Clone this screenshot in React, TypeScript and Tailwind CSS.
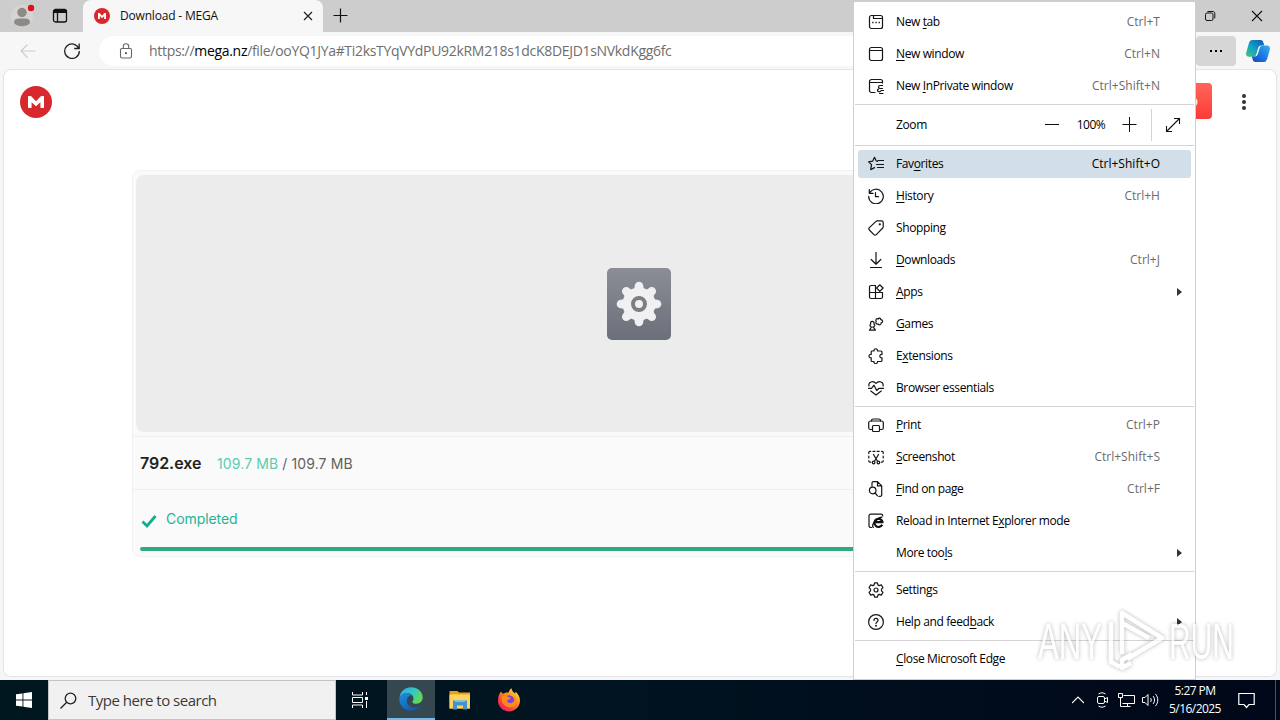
import { ReactNode } from "react";
import clsx from "clsx";

type Item = {
  label: string; // "&" marks the access key
  keys?: string;
  icon?: ReactNode;
  sub?: boolean;
  active?: boolean;
};

const Icon = ({ children }: { children: ReactNode }) => (
  <svg
    className="h-4 w-4 shrink-0"
    viewBox="0 0 16 16"
    fill="none"
    stroke="#151515"
    strokeWidth="1.2"
    strokeLinecap="round"
    strokeLinejoin="round">
    {children}
  </svg>
);

const groups: Item[][] = [
  [
    {
      label: "New &tab",
      keys: "Ctrl+T",
      icon: (
        <Icon>
          <rect x="1.5" y="1.5" width="13" height="13" rx="2" />
          <path d="M5.5 1.5v3h9" />
          <path d="M4.2 8.5h1.3M7.4 8.5h1.3M10.6 8.5h1.3" strokeWidth="1.6" strokeLinecap="butt" />
        </Icon>
      ),
    },
    {
      label: "&New window",
      keys: "Ctrl+N",
      icon: (
        <Icon>
          <rect x="1.5" y="1.5" width="13" height="13" rx="2" />
          <path d="M1.5 4.5h13" />
        </Icon>
      ),
    },
    {
      label: "New &InPrivate window",
      keys: "Ctrl+Shift+N",
      icon: (
        <Icon>
          <path d="M7 14.5H3.5a2 2 0 0 1-2-2v-9a2 2 0 0 1 2-2h9a2 2 0 0 1 2 2V5M1.5 4.5h13" />
          <path d="M14.5 7.5h-2.2c-1 0-1.8.8-1.8 1.6s.6 1.4 1.500 1.400h2.500M15.500 12.500h-2.200c-.6 0-.6 1.200-1.400 1.200H11c-1 0-1.600-.6-1.600-1.400 0-.7.5-1.200 1.200-1.200M11.500 15.600h3.500" />
        </Icon>
      ),
    },
  ],
  [
    {
      label: "Fav&orites",
      keys: "Ctrl+Shift+O",
      active: true,
      icon: (
        <Icon>
          <path d="M9.600 5.300 8.300 5 6.500 1.300 4.600 5.200.6 5.800l2.900 2.900-.8 4.900 3.800-2" />
          <path d="M10 4.500h5.500M8.500 8.500h7M9.500 11.500h6" />
        </Icon>
      ),
    },
    {
      label: "&History",
      keys: "Ctrl+H",
      icon: (
        <Icon>
          <path d="M1.300 1.500v3.800h3.800M1.600 5A7.300 7.300 0 1 1 .7 8.400M7.500 4.500v4.200h3" />
        </Icon>
      ),
    },
    {
      label: "Shopping",
      icon: (
        <Icon>
          <path d="M9.200.9h4.400c.9 0 1.600.7 1.600 1.600v4.300c0 .5-.2.9-.5 1.200l-6.400 6.600a1.700 1.700 0 0 1-2.400 0L1.400 10a1.700 1.700 0 0 1 0-2.400L8 1.400c.3-.3.8-.5 1.200-.5z" />
          <circle cx="11.800" cy="4.300" r=".5" fill="#222" />
        </Icon>
      ),
    },
    {
      label: "&Downloads",
      keys: "Ctrl+J",
      icon: (
        <Icon>
          <path d="M8 .5v11.500M3.200 7.500 8 12.200l4.800-4.700M2.500 15.500h11" />
        </Icon>
      ),
    },
    {
      label: "&Apps",
      sub: true,
      icon: (
        <Icon>
          <path d="M7.500 14.500H3A1.500 1.500 0 0 1 1.500 13V3A1.500 1.500 0 0 1 3 1.500h4.500v13zm0 0H13a1.500 1.500 0 0 0 1.500-1.500V8.500h-13" />
          <path d="m11.700.8 3.400 3.200-3.300 3.400L8.600 4z" />
        </Icon>
      ),
    },
    {
      label: "&Games",
      icon: (
        <Icon>
          <path d="M1.500 14.200c0-1.200 1.700-1.700 1.700-3.200-1.800-1-1.500-2.200-.5-2.800C1.300 4.500 7.200 4.500 6 8.200c1 .6 1.200 1.800-.5 2.800 0 1.500 1.800 2 1.800 3.200zM3 11h2.600" />
          <path d="M8.200 5.200c-1.200-1.400.6-3.400 2-2.200.5-1.500 2.700-1 2.500.6 2.300 0 2.600 3 .4 3.300.3 2-2 2.600-2.800 1-1.600 1-3.300-.7-2.100-2.700z" />
        </Icon>
      ),
    },
    {
      label: "E&xtensions",
      icon: (
        <Icon>
          <path d="M6 3c-.4-3 3.900-3 3.500 0h3.200c.9 0 1.300.4 1.300 1v2.500c-2.900-.4-2.900 3.700 0 3.300v2.700c0 .7-.5 1-1.300 1H9.500c.3 3-3.900 3-3.500 0H4c-.5 0-.8-.3-.8-.8V9.800c-3 .3-3-3.700 0-3.300V3.800c0-.5.3-.8.8-.8z" />
        </Icon>
      ),
    },
    {
      label: "Browser essentials",
      icon: (
        <Icon>
          <path d="M1 6C0 2.300 4.800-.2 8 3.400 11.200-.2 16 2.300 15 6M2.800 11 8 15l5.200-4M.5 8.300h3L6 5.200l2.700 5.300L11 8.300h4.500" />
        </Icon>
      ),
    },
  ],
  [
    {
      label: "&Print",
      keys: "Ctrl+P",
      icon: (
        <Icon>
          <path d="M4.500 12.500h-2A1.800 1.800 0 0 1 .700 11V6c0-1.100.9-2 2-2h10.600a2 2 0 0 1 2 2v5c0 .8-.7 1.500-1.500 1.500h-2.300" />
          <path d="M3.500 4v-.5c0-1 .7-1.500 1.500-1.500h6c.8 0 1.500.6 1.500 1.500V4" />
          <rect x="4.500" y="8.500" width="7" height="6" rx="1" />
        </Icon>
      ),
    },
    {
      label: "&Screenshot",
      keys: "Ctrl+Shift+S",
      icon: (
        <Icon>
          <path d="M.8 4.500v-1c0-.7.5-1.200 1.200-1.200h.7M5 2.300h2M9.200 2.300h2M13.500 2.300h.5c.7 0 1.200.5 1.200 1.200v1M15.200 7v2M.8 7v2M.8 11.500v.5c0 .7.5 1.200 1.200 1.200h.7M15.200 11.500v.5c0 .7-.5 1.200-1.200 1.200h-.7M5.500 5.500l4 6.800M10.500 5.500l-4 6.800" />
          <circle cx="5.600" cy="13.500" r="1.300" />
          <circle cx="10.400" cy="13.500" r="1.300" />
        </Icon>
      ),
    },
    {
      label: "&Find on page",
      keys: "Ctrl+F",
      icon: (
        <Icon>
          <path d="M4 5.200V2A1.400 1.400 0 0 1 5.400.6h4.100l4.200 4.300v9A1.400 1.400 0 0 1 12.300 15.400H11M9.500.8v4.100h4" />
          <circle cx="4.700" cy="9.500" r="3.300" />
          <path d="m7.200 12 2.300 2.800" />
        </Icon>
      ),
    },
    {
      label: "Reload in Internet E&xplorer mode",
      icon: (
        <Icon>
          <path d="M3.500 14.500H3A1.800 1.800 0 0 1 1 12.700V3c0-1 .8-1.800 1.800-1.800H13c1 0 1.800.7 1.800 1.800" />
          <path d="M14.200 11.800a4.100 4.100 0 1 1 .4-2.600H7" stroke="#111" strokeWidth="2.200" strokeLinecap="butt" />
          <path d="M5.200 14.400C3.200 12 8 5.200 13.800 4.200" stroke="#111" strokeWidth="1.300" />
        </Icon>
      ),
    },
    { label: "More too&ls", sub: true },
  ],
  [
    {
      label: "Settin&gs",
      icon: (
        <Icon>
          <path d="M6.600.8h2.800l.5 2.100 1.300.7 2.100-.7 1.700 2.800L13.500 7.200v1.600l1.500 1.500-1.700 2.800-2.100-.7-1.300.7-.5 2.100H6.600l-.5-2.100-1.300-.7-2.100.7L1 10.300l1.500-1.500V7.200L1 5.700l1.700-2.800 2.100.7 1.300-.7z" />
          <circle cx="8" cy="8" r="2" />
        </Icon>
      ),
    },
    {
      label: "Help and feed&back",
      sub: true,
      icon: (
        <Icon>
          <circle cx="8" cy="8" r="7.400" />
          <path d="M6 6.400c0-2.600 4-2.600 4 0C10 8 8 7.900 8 9.500" />
          <circle cx="8" cy="11.700" r=".4" fill="#222" />
        </Icon>
      ),
    },
  ],
  [{ label: "&Close Microsoft Edge" }],
];

function Label({ text }: { text: string }) {
  const i = text.indexOf("&");
  if (i < 0) return <>{text}</>;
  return (
    <>
      {text.slice(0, i)}
      <u className="underline-offset-2">{text[i + 1]}</u>
      {text.slice(i + 2)}
    </>
  );
}

function MenuRow({ item }: { item: Item }) {
  return (
    <li className="h-8 px-1 py-0.5">
      <div
        className={clsx(
          "flex h-7 items-center rounded-[3px] pl-2.5 text-black",
          item.active && "bg-[#d2dfe8]"
        )}>
        <span className="w-7 shrink-0">{item.icon}</span>
        <span className="grow whitespace-pre">
          <Label text={item.label} />
        </span>
        {item.keys && (
          <span
            className={clsx(
              "pr-[31px] tracking-[0.02px]",
              !item.active && "text-[#6b6b6b]"
            )}>
            {item.keys}
          </span>
        )}
        {item.sub && (
          <svg className="mr-[9px] h-2 w-[5px]" viewBox="0 0 5 8">
            <path d="M0 0l5 4-5 4z" fill="#333" />
          </svg>
        )}
      </div>
    </li>
  );
}

const Separator = () => <li className="mx-px my-0.5 h-px bg-[#d4d4d4]" />;

function ZoomRow() {
  return (
    <li className="flex h-9 items-center pl-[42px] text-black">
      <span className="w-[148px]">Zoom</span>
      <svg className="h-4 w-4" viewBox="0 0 16 16" stroke="#111" fill="none">
        <path d="M1 7.500h14" />
      </svg>
      <span className="w-[62px] text-center tracking-[-0.5px]">100%</span>
      <svg className="h-4 w-4" viewBox="0 0 16 16" stroke="#111" fill="none">
        <path d="M.500 7.500h14M7.500 0v15" />
      </svg>
      <span className="ml-[13px] h-8 w-px bg-[#d4d4d4]" />
      <svg className="ml-[13px] h-4 w-4" viewBox="0 0 16 16" stroke="#111" strokeWidth="1.100" fill="none">
        <path d="M1.500 14.500l13-13M9 1.500h5.500V7M1.500 9v5.500H7" />
      </svg>
    </li>
  );
}

function BrowserMenu() {
  return (
    <ul className="absolute left-[853px] top-px h-[679px] w-[343px] border border-[#cfcfcf] bg-white pt-1 font-['Open_Sans','Noto_Sans',sans-serif] text-[12px] leading-4 tracking-[-0.38px]">
      {groups.map((group, i) => (
        <div key={i} className="contents">
          {i > 0 && <Separator />}
          {i === 1 && (
            <>
              <ZoomRow />
              <Separator />
            </>
          )}
          {group.map((item) => (
            <MenuRow key={item.label} item={item} />
          ))}
        </div>
      ))}
    </ul>
  );
}

const MegaLogo = ({ className }: { className: string }) => (
  <svg className={className} viewBox="0 0 32 32">
    <circle cx="16" cy="16" r="16" fill="#d9272e" />
    <path
      d="M8 21.300V10.600c0-.4.3-.6.6-.6H11l5 5.300 5-5.300h2.400c.4 0 .6.2.6.6v10.700c0 .4-.2.6-.6.6H21c-.4 0-.6-.2-.6-.6v-5.100L16 20.300l-4.400-4.100v5.100c0 .4-.2.6-.6.6H8.600c-.4 0-.6-.2-.6-.6z"
      fill="#fff"
    />
  </svg>
);

function TabStrip() {
  return (
    <div className="flex h-8 bg-[#cdcdcd]">
      <div className="flex w-[83px] items-center">
        <svg className="ml-[11px] h-8 w-7" viewBox="0 0 28 32">
          <circle cx="11" cy="16" r="11" fill="#d6d4d2" />
          <circle cx="11" cy="12.500" r="4.700" fill="#8c8987" />
          <path d="M3 22.500c0-4 3-4 8-4s8 0 8 4c-2 5-14 5-16 0z" fill="#8c8987" />
          <circle cx="20" cy="8" r="3.200" fill="#d8131b" />
        </svg>
        <svg className="ml-[13px] h-4 w-4" viewBox="0 0 16 16" fill="none" stroke="#111" strokeWidth="1.300">
          <rect x="1.500" y="1.500" width="13" height="12.500" rx="2" />
          <path d="M1.500 3.500h13" strokeWidth="3" />
          <path d="M5.500 4v10" />
        </svg>
      </div>
      <div className="flex w-[240px] items-center rounded-t-lg bg-[#f7f7f7] pl-[11px]">
        <MegaLogo className="h-4 w-4" />
        <span className="ml-[10px] w-[182px] text-[12px] tracking-[-0.18px] text-[#111]">
          Download - MEGA
        </span>
        <svg className="h-3 w-3" viewBox="0 0 12 12" stroke="#222" strokeWidth="1.200">
          <path d="M2 2l8 8M10 2l-8 8" />
        </svg>
      </div>
      <svg className="ml-2.5 mt-2 h-4 w-4" viewBox="0 0 16 16" stroke="#111" strokeWidth="1.200">
        <path d="M.500 7.500h14M7.500 .500v14" />
      </svg>
      <div className="flex grow justify-end gap-[35px] pr-[17px] pt-2.5">
        <svg className="h-3 w-3" viewBox="0 0 12 12" fill="none" stroke="#111">
          <rect x="1.500" y="3" width="7.500" height="7.500" rx="1.500" />
          <path d="M3.500 1.500H9c1 0 1.800.8 1.800 1.800v5" />
        </svg>
        <svg className="h-3 w-3" viewBox="0 0 12 12" stroke="#111" strokeWidth="1.100">
          <path d="M1 1l10 10M11 1L1 11" />
        </svg>
      </div>
    </div>
  );
}

function Toolbar() {
  return (
    <div className="flex h-[37px] items-center bg-[#f7f7f7]">
      <svg className="ml-5 h-4 w-4" viewBox="0 0 16 16" fill="none" stroke="#ccc" strokeWidth="1.200">
        <path d="M15.500 8H1M7.500 1.500L1 8l6.500 6.500" />
      </svg>
      <svg className="ml-7 h-4 w-4" viewBox="0 0 16 16" fill="none" stroke="#222" strokeWidth="1.300">
        <path d="M14.800 5.500A7.300 7.300 0 1 0 15.300 8M15.200.5v5h-5" />
      </svg>
      <div className="ml-[19px] flex h-[30px] w-[1077px] items-center rounded-full bg-white pl-5">
        <svg className="h-4 w-3.5" viewBox="0 0 14 16" fill="none" stroke="#666" strokeWidth="1.100">
          <rect x="1.500" y="5.500" width="11" height="9.500" rx="1.500" />
          <path d="M4.300 5.500V3.500a2.700 2.700 0 0 1 5.400 0v2" />
          <circle cx="7" cy="10.200" r=".6" fill="#666" />
        </svg>
        <span className="ml-4 text-[14px] tracking-[-0.31px] text-[#6e6e6e]">
          https://<span className="text-black">mega.nz</span>
          /file/ooYQ1JYa#Ti2ksTYqVYdPU92kRM218s1dcK8DEJD1sNVkdKgg6fc
        </span>
      </div>
      <div className="ml-[20px] flex h-[30px] w-10 items-center justify-center gap-[3px] rounded-[4px] bg-[#d6d6d6]">
        <i className="h-0.5 w-0.5 bg-black" />
        <i className="h-0.5 w-0.5 bg-black" />
        <i className="h-0.5 w-0.5 bg-black" />
      </div>
      <svg className="ml-2.5 h-6 w-6" viewBox="0 0 24 24">
        <defs>
          <linearGradient id="cp1" x1="0" y1="1" x2="1" y2="0">
            <stop offset="0" stopColor="#4cc66c" />
            <stop offset=".45" stopColor="#11a3c9" />
            <stop offset="1" stopColor="#1550b5" />
          </linearGradient>
          <linearGradient id="cp2" x1="0" y1="1" x2="1" y2="0">
            <stop offset="0" stopColor="#1747b8" />
            <stop offset=".5" stopColor="#1e78e6" />
            <stop offset="1" stopColor="#35b4f2" />
          </linearGradient>
        </defs>
        <path d="M6.500 1h8c1.800 0 2.600 1.200 3 3l.7 2.500h-3c-1.800 0-2.600 1-3.200 3l-1.800 6c-.5 1.600-1.500 2.300-3 2.300H3C.8 17.800-.4 16 .2 13.500l2.700-9.300C3.500 2.200 4.600 1 6.500 1z" fill="url(#cp1)" />
        <path d="M17.500 23h-8c-1.800 0-2.600-1.200-3-3l-.6-2.400h2.900c1.800 0 2.600-1 3.200-3l1.800-5.800c.5-1.600 1.500-2.300 3-2.300H21c2.200 0 3.400 1.800 2.800 4.300l-2.700 9.100c-.6 2-1.700 3.100-3.600 3.100z" fill="url(#cp2)" />
      </svg>
    </div>
  );
}

const teeth = [0, 45, 90, 135, 180, 225, 270, 315];

function Page() {
  return (
    <main className="mx-[3px] h-[608px] overflow-hidden rounded-lg border border-[#e3e3e3] bg-white font-['Inter',sans-serif]">
      <div className="flex h-16 items-center pl-4">
        <MegaLogo className="h-8 w-8" />
        <div className="ml-[1060px] mt-[-3px] flex h-9 w-[100px] items-center justify-end rounded-[4px] bg-linear-to-b from-[#ff6459] to-[#fb3a35] pr-[14px] text-[14px] text-white">
          Sign up
        </div>
        <div className="ml-[30px] flex flex-col gap-[2px]">
          <i className="h-1 w-1 rounded-full bg-[#303233]" />
          <i className="h-1 w-1 rounded-full bg-[#303233]" />
          <i className="h-1 w-1 rounded-full bg-[#303233]" />
        </div>
      </div>
      <section className="ml-[128px] mt-9 h-[387px] w-[1014px] rounded-lg border border-[#f1f1f1] bg-[#fafafa]">
        <div className="mx-[3px] mt-1 flex h-[257px] items-center justify-center rounded-lg bg-[#ececec]">
          <svg className="h-[72px] w-16" viewBox="0 0 64 72">
            <defs>
              <linearGradient id="exe" x1="0" y1="0" x2="0" y2="1">
                <stop offset="0" stopColor="#8b8e96" />
                <stop offset="1" stopColor="#6b6f7a" />
              </linearGradient>
            </defs>
            <rect width="64" height="72" rx="5" fill="url(#exe)" />
            <circle cx="32" cy="36" r="16.500" fill="#f0f0f2" />
            {teeth.map((a) => (
              <path
                key={a}
                transform={`rotate(${a} 32 36)`}
                d="M25.500 22c2-1 2-2 2.200-4a4.300 4.300 0 0 1 8.600 0c.2 2 .2 3 2.200 4z"
                fill="#f0f0f2"
              />
            ))}
            <circle cx="32" cy="36" r="6" fill="none" stroke="#7b7e86" strokeWidth="4" />
          </svg>
        </div>
        <div className="mt-[4px] flex h-[53px] items-center border-t border-[#efefef] pl-[7px]">
          <span className="w-[77px] text-[16px] font-semibold tracking-[-0.05px] text-[#222]">
            792.exe
          </span>
          <span className="text-[14px] tracking-[0.11px] text-[#616161]">
            <span className="text-[#5accb0]">109.7 MB</span> / 109.7 MB
          </span>
        </div>
        <div className="flex h-[58px] items-center gap-[8px] border-t border-[#efefef] pl-2">
          <svg className="mt-1 h-4 w-[17px]" viewBox="0 0 17 16" fill="none" stroke="#12ad8d" strokeWidth="2.800">
            <path d="M1.500 8.500l4.500 4.500L14.500 3" />
          </svg>
          <span className="text-[14px] tracking-[-0.08px] text-[#1fb496]">Completed</span>
        </div>
        <div className="mx-[7px] h-1 rounded-full bg-[#2fa97e]" />
      </section>
    </main>
  );
}

function Watermark() {
  return (
    <svg
      className="absolute left-[1030px] top-[602px] h-[78px] w-[240px] overflow-visible opacity-70 drop-shadow-[0_0_2px_rgba(0,0,0,0.4)]"
      viewBox="0 0 240 78"
      fill="#fff"
      fontFamily="Liberation Sans, sans-serif"
      fontSize="50">
      <text x="8" y="57" textLength="64" lengthAdjust="spacingAndGlyphs">ANY</text>
      <path
        d="M81 20v40l9 5M92 52V11l40 25-35 21M92 21l27 15M102 52l-10 6v8l9-5"
        fill="none"
        stroke="#fff"
        strokeWidth="4.500"
        strokeLinejoin="round"
      />
      <text x="139" y="57" textLength="65" lengthAdjust="spacingAndGlyphs">RUN</text>
    </svg>
  );
}

function EdgeIcon() {
  return (
    <svg className="h-6 w-6" viewBox="0 0 24 24">
      <defs>
        <linearGradient id="e1" x1="0" y1="0" x2="1" y2=".6">
          <stop offset="0" stopColor="#2ea7e8" />
          <stop offset=".55" stopColor="#36c8c0" />
          <stop offset="1" stopColor="#63d94f" />
        </linearGradient>
        <linearGradient id="e2" x1="0" y1="0" x2=".8" y2="1">
          <stop offset="0" stopColor="#1f8fe0" />
          <stop offset="1" stopColor="#1155a8" />
        </linearGradient>
      </defs>
      <path d="M.5 11C1 4.500 6 .3 12 .3c6.800 0 11.700 4.900 11.700 10 0 3.900-3 6.400-6.400 6.400-2.700 0-4-1-4-1.800 0-.7 1.200-1.300 1.200-3.400C14.500 8.500 11.500 6 8 6 4.500 6 1.700 8 .5 11z" fill="url(#e1)" />
      <path d="M.4 12C.8 8.500 4 6 8 6c2 0 3.700.8 4.800 2C9.500 8.500 7.800 11 7.800 13.800c0 4 3.700 7 8 6.800 2.400-.1 4.500-1 6.200-2-2 3.200-5.700 5.200-10 5.200C5.200 23.800 0 18.500.4 12z" fill="url(#e2)" />
    </svg>
  );
}

function FolderIcon() {
  return (
    <svg className="h-6 w-6" viewBox="0 0 24 24">
      <path d="M1.500 3h8L11 4.500h11v16H1.500z" fill="#e8a317" />
      <path d="M1.500 6.500H22v14H1.500z" fill="#fcd462" />
      <path d="M5 21.500v-9h14v9h-4v-4H9v4z" fill="#3e94d1" />
      <path d="M7 12.500h10v1.500H7z" fill="#7fc1ec" />
    </svg>
  );
}

function FirefoxIcon() {
  return (
    <svg className="h-6 w-6" viewBox="0 0 24 24">
      <defs>
        <linearGradient id="ff" x1="1" y1="0" x2=".2" y2="1">
          <stop offset="0" stopColor="#fff04a" />
          <stop offset=".4" stopColor="#ff9a1f" />
          <stop offset=".75" stopColor="#fb4338" />
          <stop offset="1" stopColor="#e3157f" />
        </linearGradient>
      </defs>
      <path d="M4 3.500c.6 1 1.200 1.700 2 2.300C8 4.500 10 4.300 11.700 4.500 12 2.800 13 1.200 14.500.3c.3 3 2 3.700 3.500 5.200.5-.4.500-1 .3-2C21.500 6 23 9 23 12.600 23 18.800 18 23.500 12 23.500S1 18.800 1 12.800C1 9 2.200 5.600 4 3.500z" fill="url(#ff)" />
      <circle cx="12" cy="12.500" r="5.200" fill="#7542e5" />
      <path d="M5 8.500c2.500-1.500 5-1 6.500.8l2.500.5c-.5 1.700-3.500 1.500-4 3.200.8 2.300 4.500 3 6.500.8 1.400-1.800.5-4.500-1-5.800 3.500.8 5 4 4 7-1.500 3.800-5.500 5-9 3.800C6 17.200 4 13 5 8.500z" fill="#ff8a1c" />
    </svg>
  );
}

function Taskbar() {
  return (
    <footer className="flex h-10 bg-linear-to-r from-[#00171f] via-[#001320] to-[#000718] text-white">
      <div className="flex w-12 items-center justify-center">
        <svg className="h-4 w-4" viewBox="0 0 16 16" fill="#fff">
          <path d="M0 2.300l6.500-.9v6.100H0zM7.400 1.300L16 0v7.500H7.400zM0 8.500h6.500v6.100L0 13.700zM7.400 8.500H16V16l-8.600-1.200z" />
        </svg>
      </div>
      <div className="flex w-72 items-center border border-[#c4c4c4] bg-[#f1f1f1] pl-[11px]">
        <svg className="h-[17px] w-[17px]" viewBox="0 0 17 17" fill="none" stroke="#222" strokeWidth="1.300">
          <circle cx="10.500" cy="6.500" r="5.300" />
          <path d="M6.700 10.300L.5 16.500" />
        </svg>
        <span className="ml-[11px] text-[15px] tracking-[-0.5px] text-[#3a3a3a]">
          Type here to search
        </span>
      </div>
      <div className="flex w-[51px] items-center justify-center pr-[3px]">
        <svg className="h-4 w-4" viewBox="0 0 16 16" fill="none" stroke="#fff">
          <path d="M.5 0v3h10V0M.5 16v-3h10v3M.5 5.500h10v5H.5zM14.500 0v3M14.500 9v7" />
          <path d="M13 5h3v3h-3z" fill="#fff" stroke="none" />
        </svg>
      </div>
      <div className="flex w-12 items-center justify-center border-b-2 border-[#76b9ed] bg-[#35474f]">
        <EdgeIcon />
      </div>
      <div className="flex w-[49px] items-center justify-center">
        <FolderIcon />
      </div>
      <div className="flex w-[49px] items-center justify-center">
        <FirefoxIcon />
      </div>
      <div className="flex grow items-center justify-end">
        <svg className="h-3 w-3" viewBox="0 0 12 12" fill="none" stroke="#fff" strokeWidth="1.200">
          <path d="M0 9l6-6 6 6" />
        </svg>
        <svg className="ml-3 h-4 w-[14px]" viewBox="0 0 14 16" fill="none" stroke="#fff">
          <rect x="1.500" y="4.500" width="7" height="7" rx="1.500" />
          <path d="M8.500 7l3-1.500v5L8.500 9M2.500 2c2-1.600 5-1.600 7 0M2.500 14c2 1.600 5 1.600 7 0" />
        </svg>
        <svg className="ml-[8px] h-4 w-[17px]" viewBox="0 0 17 16" fill="none" stroke="#fff">
          <path d="M5.500 3.500h11v8H4.500M4.500 14.500h8M9.500 11.500v3M2.500 6v8.500h2M.5 1.500h4v4h-4z" />
        </svg>
        <svg className="ml-[7px] h-4 w-[17px]" viewBox="0 0 17 16" fill="none" stroke="#fff">
          <path d="M.5 5.500h2.500l3-3v11l-3-3H.5zM8.500 6c1 1.200 1 2.800 0 4M11 4c2 2.300 2 5.700 0 8M13.500 2c3 3.500 3 8.500 0 12" />
        </svg>
        <div className="ml-[9px] w-[54px] whitespace-nowrap text-center text-[12px] leading-[18px] tracking-[-0.55px]">
          <div>5:27 PM</div>
          <div>5/16/2025</div>
        </div>
        <svg className="ml-[16px] mr-5 h-[17px] w-[17px]" viewBox="0 0 17 17" fill="none" stroke="#fff" strokeWidth="1.200">
          <path d="M.8 1.500h15.400v11H11l-2.500 3-2.500-3H.8z" />
        </svg>
        <i className="mr-1 h-10 w-px bg-[#4b5360]" />
      </div>
    </footer>
  );
}

export default function App() {
  return (
    <div className="relative flex h-[720px] w-[1280px] flex-col overflow-hidden bg-[#f3f5f6] font-['Open_Sans','Noto_Sans',sans-serif]">
      <TabStrip />
      <Toolbar />
      <div className="h-[611px] bg-[#f5f6f7]">
        <Page />
      </div>
      <Taskbar />
      <BrowserMenu />
      <Watermark />
    </div>
  );
}
